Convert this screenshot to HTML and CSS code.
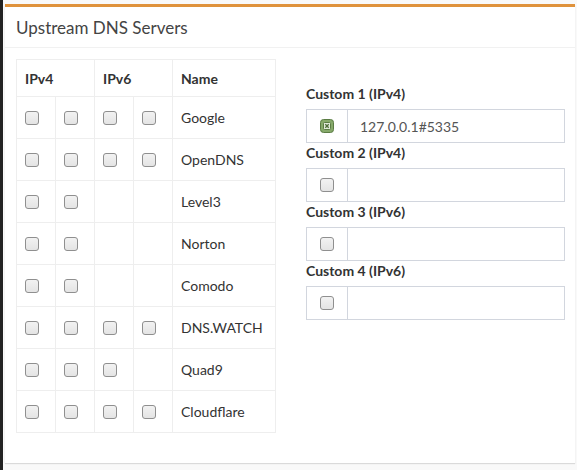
FILE: index.html
```html
<!DOCTYPE html>
<html>
<head>
<meta charset="utf-8">
<link rel="stylesheet" href="styles.css">
</head>
<body>
<div class="sidebar"></div>
<div class="content">
  <div class="box">
    <div class="box-header"><h3 class="box-title">Upstream DNS Servers</h3></div>
    <div class="box-body">
      <div class="col-left">
        <table class="dns-table">
          <thead>
            <tr><th colspan="2">IPv4</th><th colspan="2">IPv6</th><th class="name">Name</th></tr>
          </thead>
          <tbody>
            <tr><td><input type="checkbox"></td><td><input type="checkbox"></td><td><input type="checkbox"></td><td><input type="checkbox"></td><td class="name">Google</td></tr>
            <tr><td><input type="checkbox"></td><td><input type="checkbox"></td><td><input type="checkbox"></td><td><input type="checkbox"></td><td class="name">OpenDNS</td></tr>
            <tr><td><input type="checkbox"></td><td><input type="checkbox"></td><td></td><td></td><td class="name">Level3</td></tr>
            <tr><td><input type="checkbox"></td><td><input type="checkbox"></td><td></td><td></td><td class="name">Norton</td></tr>
            <tr><td><input type="checkbox"></td><td><input type="checkbox"></td><td></td><td></td><td class="name">Comodo</td></tr>
            <tr><td><input type="checkbox"></td><td><input type="checkbox"></td><td><input type="checkbox"></td><td><input type="checkbox"></td><td class="name">DNS.WATCH</td></tr>
            <tr><td><input type="checkbox"></td><td><input type="checkbox"></td><td><input type="checkbox"></td><td></td><td class="name">Quad9</td></tr>
            <tr><td><input type="checkbox"></td><td><input type="checkbox"></td><td><input type="checkbox"></td><td><input type="checkbox"></td><td class="name">Cloudflare</td></tr>
          </tbody>
        </table>
      </div>
      <div class="col-right">
        <label class="field-label">Custom 1 (IPv4)</label>
        <div class="input-group">
          <span class="addon">
            <svg class="checked" width="14" height="14" viewBox="0 0 14 14">
              <rect x="0.5" y="0.5" width="13" height="13" rx="3" fill="#86a96a" stroke="#5b7c44"/>
              <rect x="3.5" y="3.5" width="7" height="7" rx="1" fill="#e3ecdc" stroke="#5b7c44" stroke-width="1"/>
              <path d="M5.3 5.3 L8.7 8.7 M8.7 5.3 L5.3 8.7" stroke="#4d6b38" stroke-width="1.3"/>
            </svg>
          </span>
          <span class="value">127.0.0.1#5335</span>
        </div>
        <label class="field-label">Custom 2 (IPv4)</label>
        <div class="input-group">
          <span class="addon"><input type="checkbox"></span>
          <span class="value"></span>
        </div>
        <label class="field-label">Custom 3 (IPv6)</label>
        <div class="input-group">
          <span class="addon"><input type="checkbox"></span>
          <span class="value"></span>
        </div>
        <label class="field-label">Custom 4 (IPv6)</label>
        <div class="input-group">
          <span class="addon"><input type="checkbox"></span>
          <span class="value"></span>
        </div>
      </div>
    </div>
  </div>
</div>
</body>
</html>
```

FILE: styles.css
```css
* { box-sizing: border-box; }
html, body { margin: 0; height: 100%; }
body {
  display: flex;
  background: #f9f9f9;
  font-family: "Lato", "Liberation Sans", sans-serif;
  font-size: 14px;
  color: #333;
}
.sidebar { width: 3px; background: #222; flex: none; }
.content { flex: 1; padding: 4px 2px 0 2px; }
.box {
  background: #fff;
  border-top: 3px solid #df923c;
  box-shadow: 0 1px 1px rgba(0,0,0,0.12);
}
.box-header {
  height: 41px;
  padding: 0 11px;
  border-bottom: 1px solid #f1f1f1;
  display: flex;
  align-items: center;
}
.box-title {
  margin: 0;
  font-size: 17px;
  font-weight: 400;
  color: #444;
}
.box-body {
  display: grid;
  grid-template-columns: 290px 1fr;
  padding: 11px 10px 30px 11px;
}
.dns-table {
  border-collapse: collapse;
  border: 1px solid #eeeeee;
}
.dns-table th, .dns-table td {
  border: 1px solid #eeeeee;
  text-align: left;
  padding: 0 8px;
  vertical-align: middle;
}
.dns-table th {
  height: 37px;
  font-weight: 700;
  color: #333;
}
.dns-table td { height: 42px; width: 39px; }
.dns-table th.name, .dns-table td.name { width: 103px; }
input[type="checkbox"] {
  -webkit-appearance: none;
  appearance: none;
  display: block;
  width: 14px;
  height: 14px;
  margin: 0;
  border: 1px solid #8f8f8f;
  border-radius: 3px;
  background: linear-gradient(#f2f2f2, #e4e4e4);
}
.col-right { padding-top: 25px; display: flex; flex-direction: column; }
.field-label {
  font-weight: 700;
  line-height: 20px;
  margin: 0 0 5px 0;
  color: #333;
}
.input-group {
  display: flex;
  height: 34px;
  border: 1px solid #d2d6de;
}
.addon {
  width: 41px;
  border-right: 1px solid #d2d6de;
  display: flex;
  align-items: center;
  justify-content: center;
  flex: none;
}
.checked { display: block; }
.value {
  flex: 1;
  display: flex;
  align-items: center;
  padding-left: 12px;
  color: #555;
}
```
